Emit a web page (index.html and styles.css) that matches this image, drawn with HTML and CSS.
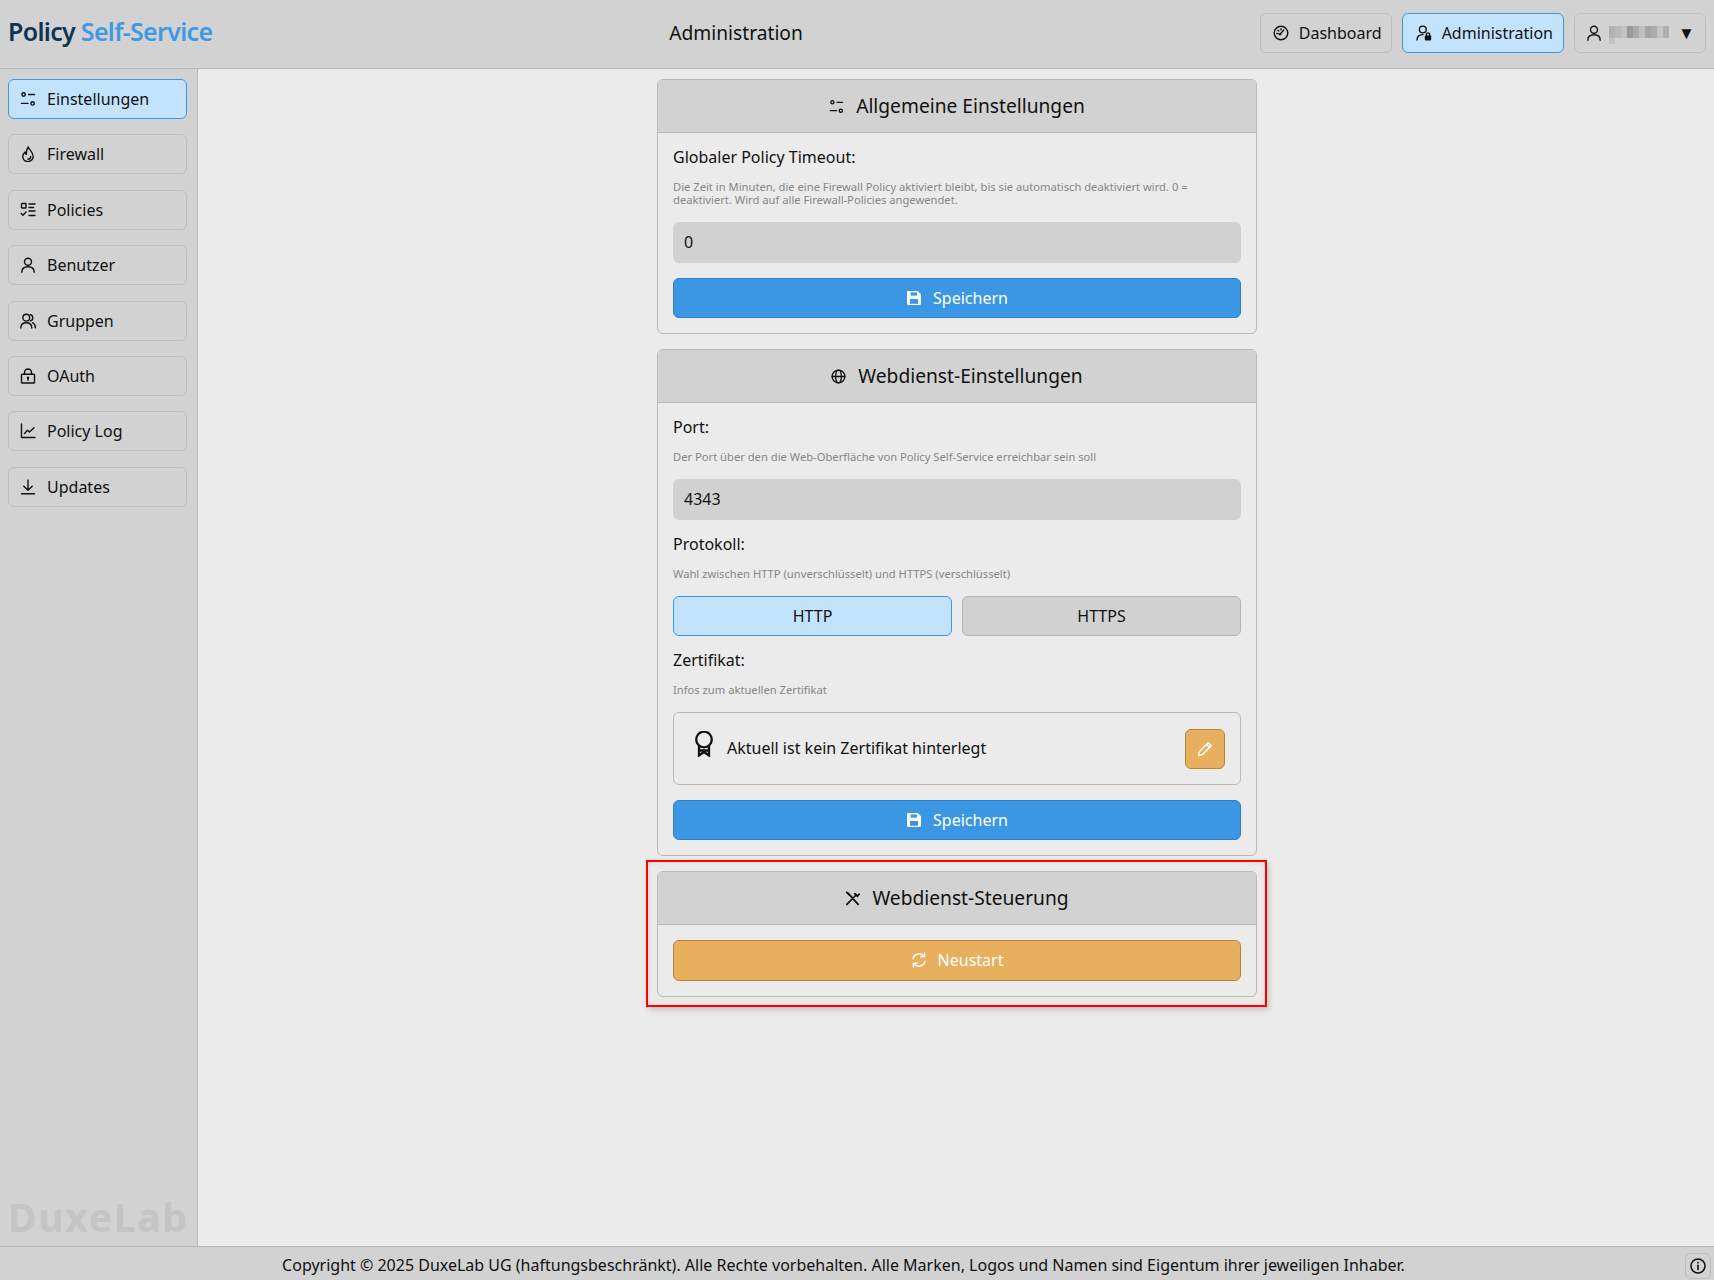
FILE: index.html
```html
<!DOCTYPE html>
<html lang="de">
<head>
<meta charset="utf-8">
<title>Policy Self-Service</title>
<link rel="stylesheet" href="styles.css">
</head>
<body>
<svg class="defs" width="0" height="0" aria-hidden="true">
  <symbol id="i-sliders" viewBox="0 0 16 16"><circle cx="3.600" cy="3.500" r="1.700"/><path d="M8.500 3.500H14.500M1.500 12.400H8"/><circle cx="12.600" cy="12.400" r="1.700"/></symbol>
  <symbol id="i-flame" viewBox="0 0 16 16"><path d="M8.200.8c.5 2.800 5 5 5 9.700A5.200 5.200 0 0 1 8 15.600a5.200 5.200 0 0 1-5.200-5c0-2.100 1-3.500 2.200-4.600.2 1 .6 1.800 1.400 2.300C6.200 5.500 6.800 2.900 8.200.8Z"/><path d="M10.700 10.500A2.800 2.800 0 0 1 8 13.300"/></symbol>
  <symbol id="i-list" viewBox="0 0 16 16"><rect x="1.500" y="1.500" width="4.500" height="4.500" rx=".6"/><path d="M9 2h6M9 5.500h4.500M9 9h6M9 13.500h6M1.200 11.500l1.800 1.800 3-3.300"/></symbol>
  <symbol id="i-user" viewBox="0 0 16 16"><circle cx="8" cy="4.700" r="3.500"/><path d="M1.800 15.200c0-3.400 2.400-5.400 6.200-5.400s6.200 2 6.200 5.400"/></symbol>
  <symbol id="i-users" viewBox="0 0 16 16"><circle cx="6.300" cy="4.700" r="3.400"/><path d="M.8 15c0-3.300 2.200-5.200 5.500-5.200s5.500 1.900 5.500 5.200M10.500 1.600a3.300 3.300 0 0 1 0 6.300M12.600 9.700c1.800.8 2.800 2.600 2.800 5"/></symbol>
  <symbol id="i-lock" viewBox="0 0 16 16"><rect x="1.500" y="6.300" width="13" height="8.700" rx=".8"/><path d="M4.500 6.300V4.500a3.500 3.500 0 0 1 7 0v1.800"/><circle class="solid" cx="8" cy="9.800" r="1.200"/><path d="M8 10v2.300"/></symbol>
  <symbol id="i-chart" viewBox="0 0 16 16"><path d="M1.500 1v13.500H15M4.500 10.500l3-3.200 2 1.700L14 4.800"/></symbol>
  <symbol id="i-download" viewBox="0 0 16 16"><path d="M8 1v10M3.800 7.200 8 11.300l4.200-4.100M1.500 14.700h13"/></symbol>
  <symbol id="i-gauge" viewBox="0 0 16 16"><circle cx="8" cy="8" r="6.800"/><path d="m6.800 9.500 4-4.500M3.800 8.500h1.200M8 3.700v1.200M5 5.200l.8.800"/><circle class="solid" cx="7" cy="9.300" r="1.200"/></symbol>
  <symbol id="i-admin" viewBox="0 0 16 16"><circle cx="6.800" cy="4.500" r="3.400"/><path d="M1 15c0-3.400 2.300-5.300 6-5.400"/><rect class="solid" x="8.800" y="10.600" width="6.400" height="4.800" rx=".8"/><path d="M10.400 10.600V9.500a1.600 1.600 0 0 1 3.200 0v1.100"/></symbol>
  <symbol id="i-globe" viewBox="0 0 16 16"><circle cx="8" cy="8" r="6.800"/><ellipse cx="8" cy="8" rx="3" ry="6.800"/><path d="M1.200 8h13.600"/></symbol>
  <symbol id="i-save" viewBox="0 0 16 16"><path class="solid" d="M1 2.200C1 1.500 1.500 1 2.200 1h9.500L15 4.300v9.500c0 .7-.5 1.200-1.200 1.200H2.200C1.500 15 1 14.500 1 13.800Z"/><rect class="cut" x="4.500" y="2.400" width="6.500" height="3.200"/><rect class="cut" x="4" y="9" width="8" height="4.800"/></symbol>
  <symbol id="i-tools" viewBox="0 0 16 16"><path class="thick" d="M2 14.200 12 4M3.500 2.500l10.500 11.700M10.500 2.800l2.800 2.800L15 3.500M1.800 1.500 5 4.700"/></symbol>
  <symbol id="i-refresh" viewBox="0 0 16 16"><path d="M2 6.800A6.200 6.200 0 0 1 13 4.200M14 9.200A6.200 6.200 0 0 1 3 11.800"/><path d="M13.600 1v3.700H9.900M2.400 15v-3.700h3.700"/></symbol>
  <symbol id="i-pencil" viewBox="0 0 16 16"><path d="m11.200 1.800 3 3L5.500 13.500l-4 1 1-4ZM9.600 3.400l3 3"/></symbol>
  <symbol id="i-award" viewBox="0 0 20 26"><circle cx="10" cy="8.500" r="7.800"/><path d="M5 15v9.500l5-3.500 5 3.500V15M5 19.500h10"/></symbol>
  <symbol id="i-info" viewBox="0 0 16 16"><circle cx="8" cy="8" r="7"/><path d="M8 7.200v4.300"/><circle class="solid" cx="8" cy="4.700" r=".9"/></symbol>
</svg>

<header class="topbar">
  <div class="logo"><span class="logo-dark">Policy</span> <span class="logo-blue">Self-Service</span></div>
  <div class="page-title">Administration</div>
  <nav class="topnav">
    <a class="btn btn-dash"><svg class="ico"><use href="#i-gauge"/></svg>Dashboard</a>
    <a class="btn btn-admin active"><svg class="ico"><use href="#i-admin"/></svg>Administration</a>
    <a class="btn user-btn">
      <svg class="ico"><use href="#i-user"/></svg>
      <svg class="mosaic" viewBox="0 0 60 18" width="60" height="18" aria-hidden="true">
        <rect y="0" width="6" height="12" fill="#b2b2b2"/><rect x="6" width="6" height="12" fill="#b8b8b8"/><rect x="12" width="6" height="12" fill="#c3c3c3"/>
        <rect x="18" width="6" height="12" fill="#9a9a9a"/><rect x="24" width="6" height="12" fill="#a9a9a9"/><rect x="30" width="6" height="12" fill="#c0c0c0"/>
        <rect x="36" width="6" height="12" fill="#a5a5a5"/><rect x="42" width="6" height="12" fill="#acacac"/><rect x="48" width="6" height="12" fill="#c3c3c3"/><rect x="54" width="6" height="12" fill="#b0b0b0"/>
        <rect x="0" y="12" width="6" height="6" fill="#c3c3c3"/>
      </svg>
      <span class="caret">▼</span>
    </a>
  </nav>
</header>

<div class="workspace">
  <aside class="sidebar">
    <a class="side-btn active"><svg class="ico"><use href="#i-sliders"/></svg>Einstellungen</a>
    <a class="side-btn"><svg class="ico"><use href="#i-flame"/></svg>Firewall</a>
    <a class="side-btn"><svg class="ico"><use href="#i-list"/></svg>Policies</a>
    <a class="side-btn"><svg class="ico"><use href="#i-user"/></svg>Benutzer</a>
    <a class="side-btn"><svg class="ico"><use href="#i-users"/></svg>Gruppen</a>
    <a class="side-btn"><svg class="ico"><use href="#i-lock"/></svg>OAuth</a>
    <a class="side-btn"><svg class="ico"><use href="#i-chart"/></svg>Policy Log</a>
    <a class="side-btn"><svg class="ico"><use href="#i-download"/></svg>Updates</a>
    <div class="watermark">DuxeLab</div>
  </aside>

  <main class="content">
    <section class="card">
      <h2 class="card-head"><svg class="ico"><use href="#i-sliders"/></svg>Allgemeine Einstellungen</h2>
      <div class="card-body">
        <div class="label">Globaler Policy Timeout:</div>
        <p class="hint">Die Zeit in Minuten, die eine Firewall Policy aktiviert bleibt, bis sie automatisch deaktiviert wird. 0 = deaktiviert. Wird auf alle Firewall-Policies angewendet.</p>
        <div class="field">0</div>
        <a class="wide-btn blue"><svg class="ico"><use href="#i-save"/></svg>Speichern</a>
      </div>
    </section>

    <section class="card">
      <h2 class="card-head"><svg class="ico"><use href="#i-globe"/></svg>Webdienst-Einstellungen</h2>
      <div class="card-body">
        <div class="label">Port:</div>
        <p class="hint">Der Port über den die Web-Oberfläche von Policy Self-Service erreichbar sein soll</p>
        <div class="field">4343</div>
        <div class="label">Protokoll:</div>
        <p class="hint">Wahl zwischen HTTP (unverschlüsselt) und HTTPS (verschlüsselt)</p>
        <div class="toggle-row">
          <a class="toggle active">HTTP</a>
          <a class="toggle">HTTPS</a>
        </div>
        <div class="label">Zertifikat:</div>
        <p class="hint">Infos zum aktuellen Zertifikat</p>
        <div class="cert">
          <svg class="award"><use href="#i-award"/></svg>
          <span class="cert-text">Aktuell ist kein Zertifikat hinterlegt</span>
          <a class="edit-btn"><svg class="ico"><use href="#i-pencil"/></svg></a>
        </div>
        <a class="wide-btn blue"><svg class="ico"><use href="#i-save"/></svg>Speichern</a>
      </div>
    </section>

    <section class="card highlighted">
      <h2 class="card-head"><svg class="ico"><use href="#i-tools"/></svg>Webdienst-Steuerung</h2>
      <div class="card-body">
        <a class="wide-btn orange no-top"><svg class="ico"><use href="#i-refresh"/></svg>Neustart</a>
      </div>
    </section>
  </main>
</div>

<footer class="footer">
  <div class="copyright">Copyright © 2025 DuxeLab UG (haftungsbeschränkt). Alle Rechte vorbehalten. Alle Marken, Logos und Namen sind Eigentum ihrer jeweiligen Inhaber.</div>
  <a class="info-btn"><svg class="ico"><use href="#i-info"/></svg></a>
</footer>
</body>
</html>
```

FILE: styles.css
```css
* { box-sizing: border-box; }
html, body { height: 100%; }
body {
  margin: 0;
  height: 1280px;
  display: flex;
  flex-direction: column;
  overflow: hidden;
  background: #ebebeb;
  color: #111;
  font-family: "Noto Sans", "Open Sans", sans-serif;
  font-size: 16px;
  line-height: 24px;
}
.defs { position: absolute; }
.ico {
  width: 16px;
  height: 16px;
  flex: none;
  fill: none;
  stroke: currentColor;
  stroke-width: 1.4;
  stroke-linecap: round;
  stroke-linejoin: round;
}
.solid { fill: currentColor; stroke: none; }
.cut { fill: #3b97e3; stroke: none; }
.thick { stroke-width: 1.9; }

.topbar {
  height: 69px;
  flex: none;
  display: flex;
  align-items: center;
  justify-content: space-between;
  padding: 0 8px 2px 8px;
  background: #d2d2d2;
  border-bottom: 1px solid #b9b9b9;
}
.logo {
  font-size: 25px;
  font-weight: 600;
  letter-spacing: -0.7px;
  line-height: 30px;
  margin-bottom: 4px;
  white-space: nowrap;
}
.logo-dark { color: #0f3553; }
.logo-blue { color: #3f9ae5; }
.page-title { font-size: 19.200px; }
.topnav { display: flex; gap: 10px; }
.btn {
  height: 40px;
  display: flex;
  align-items: center;
  gap: 10px;
  border: 1px solid #bdbdbd;
  border-radius: 6px;
  background: #d2d2d2;
}
.btn.active, .side-btn.active, .toggle.active {
  background: #c3e3fd;
  border-color: #3d97e3;
}
.btn-dash { padding: 0 9px 0 12px; }
.btn-admin { padding: 0 10px 0 13px; }
.user-btn { width: 132px; gap: 7px; padding-left: 11px; }
.mosaic { flex: none; margin-top: 4px; }
.caret { font-size: 17px; margin-left: 2px; }

.workspace { flex: 1; min-height: 0; display: flex; }
.sidebar {
  width: 198px;
  flex: none;
  display: flex;
  flex-direction: column;
  gap: 15.400px;
  padding: 10px 10px 0 8px;
  background: #d2d2d2;
  border-right: 1px solid #b9b9b9;
  position: relative;
}
.side-btn {
  height: 40px;
  display: flex;
  align-items: center;
  gap: 11px;
  padding-left: 11px;
  border: 1px solid #bdbdbd;
  border-radius: 6px;
}
.watermark {
  position: absolute;
  left: 8px;
  bottom: 9px;
  font-size: 39px;
  line-height: 40px;
  font-weight: 700;
  letter-spacing: 1.700px;
  color: #c4c4c4;
}

.content {
  flex: 1;
  min-width: 0;
  display: flex;
  flex-direction: column;
  align-items: center;
  gap: 15px;
  padding: 10px 0 0 2px;
}
.card {
  width: 600px;
  border: 1px solid #b9b9b9;
  border-radius: 6px;
  background: #ebebeb;
}
.highlighted { position: relative; }
.highlighted::after {
  content: "";
  position: absolute;
  inset: -12px -11px -11px -12px;
  border: 2px solid #f00;
  box-shadow: 2px 3px 6px rgba(0, 0, 0, 0.16), inset 0 0 5px rgba(0, 0, 0, 0.1);
  pointer-events: none;
}
.card-head {
  margin: 0;
  height: 53px;
  display: flex;
  align-items: center;
  justify-content: center;
  gap: 12px;
  background: #d2d2d2;
  border-bottom: 1px solid #b9b9b9;
  border-radius: 5px 5px 0 0;
  font-size: 19.200px;
  font-weight: 400;
  line-height: 28px;
}
.card-head .ico { width: 15px; height: 15px; }
.card-body { padding: 12px 15px 15px; }
.label { line-height: 24px; margin-top: 12px; margin-bottom: 11px; }
.label:first-child { margin-top: 0; }
.hint {
  margin: 0 0 16px;
  font-size: 11.200px;
  line-height: 13px;
  color: #868686;
}
.field {
  height: 41px;
  display: flex;
  align-items: center;
  padding: 0 0 2px 11px;
  background: #d1d1d1;
  border-radius: 6px;
}
.wide-btn {
  height: 40px;
  margin-top: 15px;
  display: flex;
  align-items: center;
  justify-content: center;
  gap: 11px;
  color: #fff;
  border: 1px solid;
  border-radius: 6px;
}
.wide-btn.no-top { margin-top: 3px; height: 41px; padding-bottom: 2px; }
.blue { background: #3b97e3; border-color: #2b7fc6; }
.orange { background: #e8af5f; border-color: #b98438; }
.toggle-row { display: flex; gap: 10px; }
.toggle {
  flex: 1;
  height: 40px;
  display: flex;
  align-items: center;
  justify-content: center;
  border: 1px solid #b5b5b5;
  border-radius: 6px;
  background: #d1d1d1;
}
.cert {
  height: 73px;
  display: flex;
  align-items: center;
  padding: 0 15px 0 20px;
  border: 1px solid #b9b9b9;
  border-radius: 6px;
}
.award {
  width: 20px;
  height: 26px;
  flex: none;
  margin-top: -10px;
  fill: none;
  stroke: #111;
  stroke-width: 2.300;
}
.cert-text { flex: 1; margin: 0 0 2px 13px; }
.edit-btn {
  width: 40px;
  height: 40px;
  display: flex;
  align-items: center;
  justify-content: center;
  color: #fff;
  background: #e8af5f;
  border: 1px solid #b98438;
  border-radius: 6px;
}

.footer {
  height: 34px;
  flex: none;
  display: flex;
  align-items: center;
  padding-right: 3px;
  background: #d2d2d2;
  border-top: 1px solid #b9b9b9;
}
.copyright { flex: 1; text-align: center; padding: 2px 0 0 2px; }
.info-btn {
  width: 26px;
  height: 26px;
  margin-top: 5px;
  display: flex;
  align-items: center;
  justify-content: center;
  border: 1px solid #bdbdbd;
  border-radius: 6px;
}
.info-btn .ico { stroke-width: 1.6; }
```
